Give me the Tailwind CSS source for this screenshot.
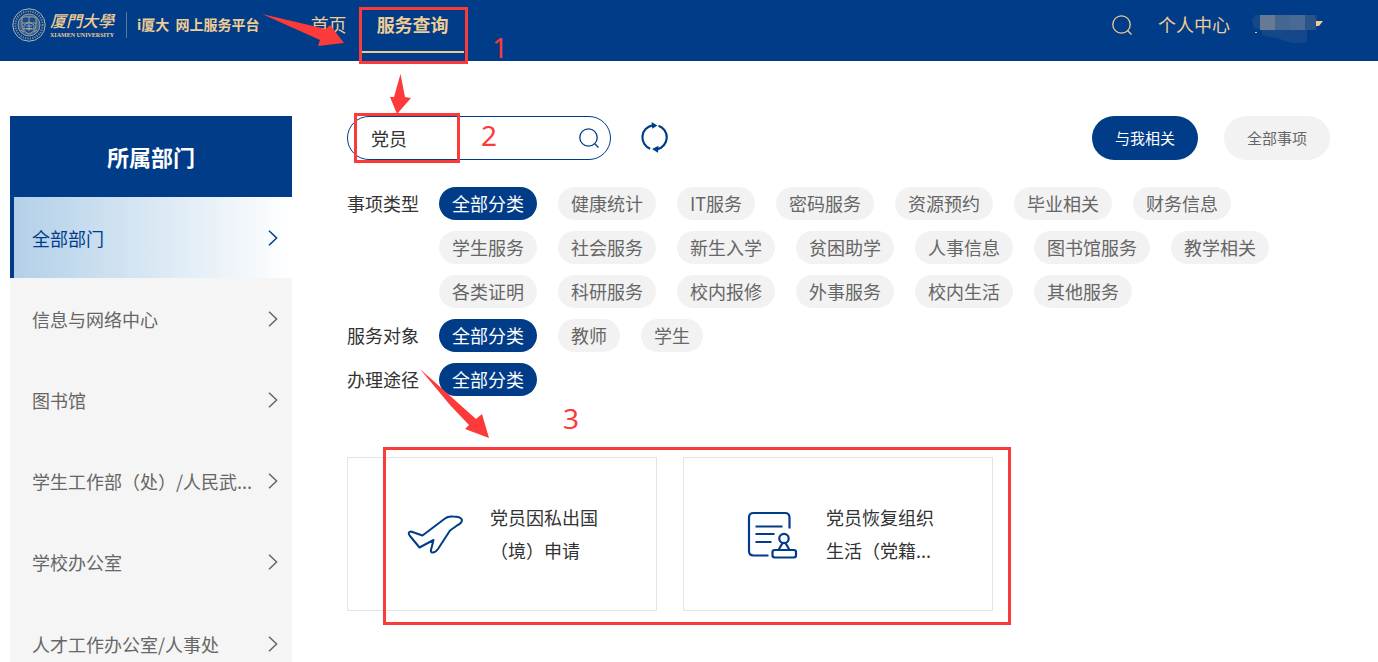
<!DOCTYPE html>
<html lang="zh-CN">
<head>
    <meta charset="UTF-8">
    <meta name="viewport" content="width=device-width, initial-scale=1.0">
    <script src="https://cdn.jsdelivr.net/npm/@tailwindcss/browser@4"></script>
    <title>厦门大学 i厦大 网上服务平台</title>
</head>
<body class="relative h-screen overflow-hidden bg-white font-['Noto_Sans_CJK_SC',sans-serif] text-lg font-normal text-[#333]">
    <header class="flex h-[61px] items-start bg-[#003c88] pl-3 pr-[54px] text-[#f0cd94]">
        <a href="#" class="flex h-[50px] shrink-0 items-center">
            <!-- University seal -->
            <svg class="size-[34px]" viewBox="0 0 34 34" fill="none" stroke="#b9b5a6">
                <circle cx="17" cy="17" r="16.2" />
                <circle cx="17" cy="17" r="13.6" stroke-width="2" stroke-dasharray="1.2 1.2" opacity=".7" />
                <circle cx="17" cy="17" r="11" fill="#3f628f" stroke-width=".8" />
                <path d="M10 10q3-2 7-1q4-1 7 1v7q0 6-7 9q-7-3-7-9zM10 15h14M17 9v6M12 21v-4l5-3 5 3v4z" fill="#174b8b" stroke-width=".8" />
                <path d="M14 18h6M14 20.500h6M17 16v7M9 22l3 2M25 22l-3 2" stroke-width=".8" />
            </svg>
            <span class="ml-1 flex w-[66px] flex-col">
                <span class="text-[16px] font-medium italic leading-[20px]">厦門大學</span>
                <span class="whitespace-nowrap font-['Liberation_Serif',serif] text-[6px] font-bold leading-[10px]">XIAMEN UNIVERSITY</span>
            </span>
            <span class="ml-[10px] h-[26px] w-px bg-[#5d7898]"></span>
            <span class="ml-[10px] whitespace-nowrap text-[14px] font-bold">i厦大&nbsp; 网上服务平台</span>
        </a>
        <nav class="ml-[36px] flex shrink-0">
            <a href="#" class="h-[53px] px-[15px] leading-[48px]">首页</a>
            <a href="#" class="h-[53px] border-b-2 border-[#e9cb95] px-[15px] font-bold leading-[48px]">服务查询</a>
        </nav>
        <div class="ml-auto flex h-[50px] items-center">
            <button type="button" aria-label="搜索">
                <svg class="size-5" viewBox="0 0 20 20" fill="none" stroke="currentColor" stroke-width="1.3">
                    <circle cx="9.5" cy="9.5" r="8.7" />
                    <path d="M15.7 15.7L19.5 19.5" />
                </svg>
            </button>
            <a href="#" class="ml-[26px] leading-[48px] h-[50px]">个人中心</a>
            <button type="button" aria-label="用户菜单" class="ml-[22px]">
                <svg class="h-[36px] w-[72px]" viewBox="0 0 72 36">
                    <path d="M3 8h62v15h-10v12q-14 3-27-3l-18-4V23l-8-2-2-8z" fill="#14488a" />
                    <path d="M8 8h15v15H8z" fill="#667a93" />
                    <path d="M23 8h15v15H23z" fill="#45668f" />
                    <path d="M38 8h15v15H38z" fill="#496a94" />
                    <path d="M53 8h9l2 3v10l-3 2h-8z" fill="#2a548b" />
                    <path d="M64 14h7l-4 5h-3z" fill="#f0cd94" />
                    <path d="M3 25h2v1H3z" fill="#f0cd94" />
                </svg>
            </button>
        </div>
    </header>

    <main class="flex items-start gap-[55px] pl-[10px] pr-12 pt-[55px]">
        <!-- Departments -->
        <aside class="w-[282px] shrink-0 bg-[#f5f5f5] text-[#666]">
            <h2 class="h-[81px] bg-[#003c88] text-center text-[22px] font-bold leading-[80px] text-white">所属部门</h2>
            <ul>
                <li><a href="#" class="flex h-[81px] items-center justify-between border-l-4 border-[#003c88] bg-linear-to-r from-[#b3d0e8] to-white pl-[18px] pr-[14px] text-[#003c88]">全部部门
                    <svg class="h-4 w-[10px]" viewBox="0 0 10 16" fill="none" stroke="currentColor" stroke-width="1.5"><path d="M1 .8L8.6 8L1 15.2" /></svg></a></li>
                <li><a href="#" class="flex h-[81px] items-center justify-between pl-[22px] pr-[14px]">信息与网络中心
                    <svg class="h-4 w-[10px]" viewBox="0 0 10 16" fill="none" stroke="currentColor" stroke-width="1.5"><path d="M1 .8L8.6 8L1 15.2" /></svg></a></li>
                <li><a href="#" class="flex h-[81px] items-center justify-between pl-[22px] pr-[14px]">图书馆
                    <svg class="h-4 w-[10px]" viewBox="0 0 10 16" fill="none" stroke="currentColor" stroke-width="1.5"><path d="M1 .8L8.6 8L1 15.2" /></svg></a></li>
                <li><a href="#" class="flex h-[81px] items-center justify-between pl-[22px] pr-[14px]"><span class="whitespace-nowrap">学生工作部（处）/人民武...</span>
                    <svg class="h-4 w-[10px]" viewBox="0 0 10 16" fill="none" stroke="currentColor" stroke-width="1.5"><path d="M1 .8L8.6 8L1 15.2" /></svg></a></li>
                <li><a href="#" class="flex h-[82px] items-center justify-between pl-[22px] pr-[14px]">学校办公室
                    <svg class="h-4 w-[10px]" viewBox="0 0 10 16" fill="none" stroke="currentColor" stroke-width="1.5"><path d="M1 .8L8.6 8L1 15.2" /></svg></a></li>
                <li><a href="#" class="flex h-[82px] items-center justify-between pl-[22px] pr-[14px]">人才工作办公室/人事处
                    <svg class="h-4 w-[10px]" viewBox="0 0 10 16" fill="none" stroke="currentColor" stroke-width="1.5"><path d="M1 .8L8.6 8L1 15.2" /></svg></a></li>
            </ul>
        </aside>

        <section class="min-w-0 flex-1">
            <div class="flex items-center">
                <form class="flex h-11 w-[264px] items-center rounded-full border border-[#003c88] pl-[23px] pr-[11px]">
                    <input type="text" value="党员" aria-label="搜索事项" class="min-w-0 flex-1 outline-none">
                    <button type="button" aria-label="搜索" class="text-[#003c88]">
                        <svg class="size-5" viewBox="0 0 20 20" fill="none" stroke="currentColor" stroke-width="1.3">
                            <circle cx="9.5" cy="9.5" r="8.7" />
                            <path d="M15.7 15.7L19.5 19.5" />
                        </svg>
                    </button>
                </form>
                <button type="button" aria-label="重置" class="ml-[29px] text-[#003c88]">
                    <svg class="h-[32px] w-[30px]" viewBox="0 0 30 32" fill="none" stroke="currentColor" stroke-width="2.2">
                        <path d="M10.2 26.700A12.2 12.2 0 0 1 12.5 3.300M18.500 3.700A12.2 12.2 0 0 1 17.5 27.100" />
                        <path d="M11.500 0L17.500 3.400L12.300 6.800zM18.500 23.800L12 27.100L18 30.800z" fill="currentColor" stroke="none" />
                    </svg>
                </button>
                <div class="ml-auto flex gap-[26px] text-[15px]">
                    <button type="button" class="h-11 w-[106px] rounded-full bg-[#003c88] text-white">与我相关</button>
                    <button type="button" class="h-11 w-[106px] rounded-full bg-[#f2f2f2] text-[#666]">全部事项</button>
                </div>
            </div>

            <!-- Filters -->
            <div class="mt-[27px] grid grid-cols-[72px_1fr] gap-x-5 gap-y-[11px] leading-[33px] text-[#666]">
                <h3 class="whitespace-nowrap text-[#333]">事项类型</h3>
                <div class="flex flex-wrap gap-x-[21px] gap-y-[11px]">
                    <button type="button" class="rounded-full bg-[#003c88] px-[13px] text-white">全部分类</button>
                    <button type="button" class="rounded-full bg-[#f2f2f2] px-[13px]">健康统计</button>
                    <button type="button" class="rounded-full bg-[#f2f2f2] px-[13px]">IT服务</button>
                    <button type="button" class="rounded-full bg-[#f2f2f2] px-[13px]">密码服务</button>
                    <button type="button" class="rounded-full bg-[#f2f2f2] px-[13px]">资源预约</button>
                    <button type="button" class="rounded-full bg-[#f2f2f2] px-[13px]">毕业相关</button>
                    <button type="button" class="rounded-full bg-[#f2f2f2] px-[13px]">财务信息</button>
                    <button type="button" class="rounded-full bg-[#f2f2f2] px-[13px]">学生服务</button>
                    <button type="button" class="rounded-full bg-[#f2f2f2] px-[13px]">社会服务</button>
                    <button type="button" class="rounded-full bg-[#f2f2f2] px-[13px]">新生入学</button>
                    <button type="button" class="rounded-full bg-[#f2f2f2] px-[13px]">贫困助学</button>
                    <button type="button" class="rounded-full bg-[#f2f2f2] px-[13px]">人事信息</button>
                    <button type="button" class="rounded-full bg-[#f2f2f2] px-[13px]">图书馆服务</button>
                    <button type="button" class="rounded-full bg-[#f2f2f2] px-[13px]">教学相关</button>
                    <button type="button" class="rounded-full bg-[#f2f2f2] px-[13px]">各类证明</button>
                    <button type="button" class="rounded-full bg-[#f2f2f2] px-[13px]">科研服务</button>
                    <button type="button" class="rounded-full bg-[#f2f2f2] px-[13px]">校内报修</button>
                    <button type="button" class="rounded-full bg-[#f2f2f2] px-[13px]">外事服务</button>
                    <button type="button" class="rounded-full bg-[#f2f2f2] px-[13px]">校内生活</button>
                    <button type="button" class="rounded-full bg-[#f2f2f2] px-[13px]">其他服务</button>
                </div>
                <h3 class="whitespace-nowrap text-[#333]">服务对象</h3>
                <div class="flex flex-wrap gap-x-[21px] gap-y-[11px]">
                    <button type="button" class="rounded-full bg-[#003c88] px-[13px] text-white">全部分类</button>
                    <button type="button" class="rounded-full bg-[#f2f2f2] px-[13px]">教师</button>
                    <button type="button" class="rounded-full bg-[#f2f2f2] px-[13px]">学生</button>
                </div>
                <h3 class="whitespace-nowrap text-[#333]">办理途径</h3>
                <div class="flex flex-wrap gap-x-[21px] gap-y-[11px]">
                    <button type="button" class="rounded-full bg-[#003c88] px-[13px] text-white">全部分类</button>
                </div>
            </div>

            <!-- Results -->
            <div class="mt-[61px] flex gap-[26px] leading-[33px]">
                <a href="#" class="flex h-[154px] w-[310px] items-center border border-[#e4e4e4] pl-[59px]">
                    <svg class="size-[58px] shrink-0 text-[#003c88]" viewBox="0 0 58 58" fill="none" stroke="currentColor" stroke-width="2" stroke-linejoin="round">
                        <path d="M3 31Q0 27 4 26.5L15.5 30.5L38 13.5Q41 11 46 11.5Q54 11.500 55 15Q55 18 50 20.500L43 25.500L31 44Q28 48 25 47.500Q23 46.500 24.500 43L26.500 35L12.500 42.500z" />
                    </svg>
                    <span class="ml-[25px] w-[108px]">党员因私出国（境）申请</span>
                </a>
                <a href="#" class="flex h-[154px] w-[310px] items-center border border-[#e4e4e4] pl-[59px]">
                    <svg class="size-[58px] shrink-0 text-[#003c88]" viewBox="0 0 58 58" fill="none" stroke="currentColor" stroke-width="2.200" stroke-linejoin="round">
                        <path d="M25.500 50.500H10.500Q6 50.500 6 46V12.500Q6 8 10.500 8H42Q46.500 8 46.500 12.500V23.500M12.500 21.500H39.500M12.500 29H31.500M12.500 37H28.500" />
                        <circle cx="41" cy="33.500" r="4.700" />
                        <path d="M39.500 38L35.500 45M42.500 38L46.500 45" />
                        <rect x="29.500" y="45" width="23.500" height="7.500" rx="2.200" />
                    </svg>
                    <span class="ml-[25px] line-clamp-2 w-[108px]">党员恢复组织生活（党籍...</span>
                </a>
            </div>
        </section>
    </main>

    <!-- Step markers drawn over the page -->
    <div class="pointer-events-none absolute inset-0 font-['Noto_Sans',sans-serif] text-[28px] font-normal leading-[28px] text-[#fc3a3a]">
        <div class="absolute left-[359px] top-[7px] h-[57px] w-[109px] border-3 border-[#fc3a3a]"></div>
        <div class="absolute left-[354px] top-[113px] h-[50px] w-[106px] border-3 border-[#fc3a3a]"></div>
        <div class="absolute left-[383px] top-[447px] h-[178px] w-[628px] border-3 border-[#fc3a3a]"></div>
        <svg class="absolute left-0 top-0 h-[440px] w-[500px]" viewBox="0 0 500 440" fill="#fc3a3a">
            <path d="M262 14L326 29L330 25L344 43L318 46L320 40z" />
            <path d="M400.500 74L405 97L411 98L397 114L390 97L394 97z" />
            <path d="M420 369L476 419L482 414L489 438L465 429L469 425L450 405z" />
        </svg>
        <span class="absolute left-[492px] top-[33px]">1</span>
        <span class="absolute left-[481px] top-[121px]">2</span>
        <span class="absolute left-[563px] top-[404px]">3</span>
    </div>
</body>
</html>
